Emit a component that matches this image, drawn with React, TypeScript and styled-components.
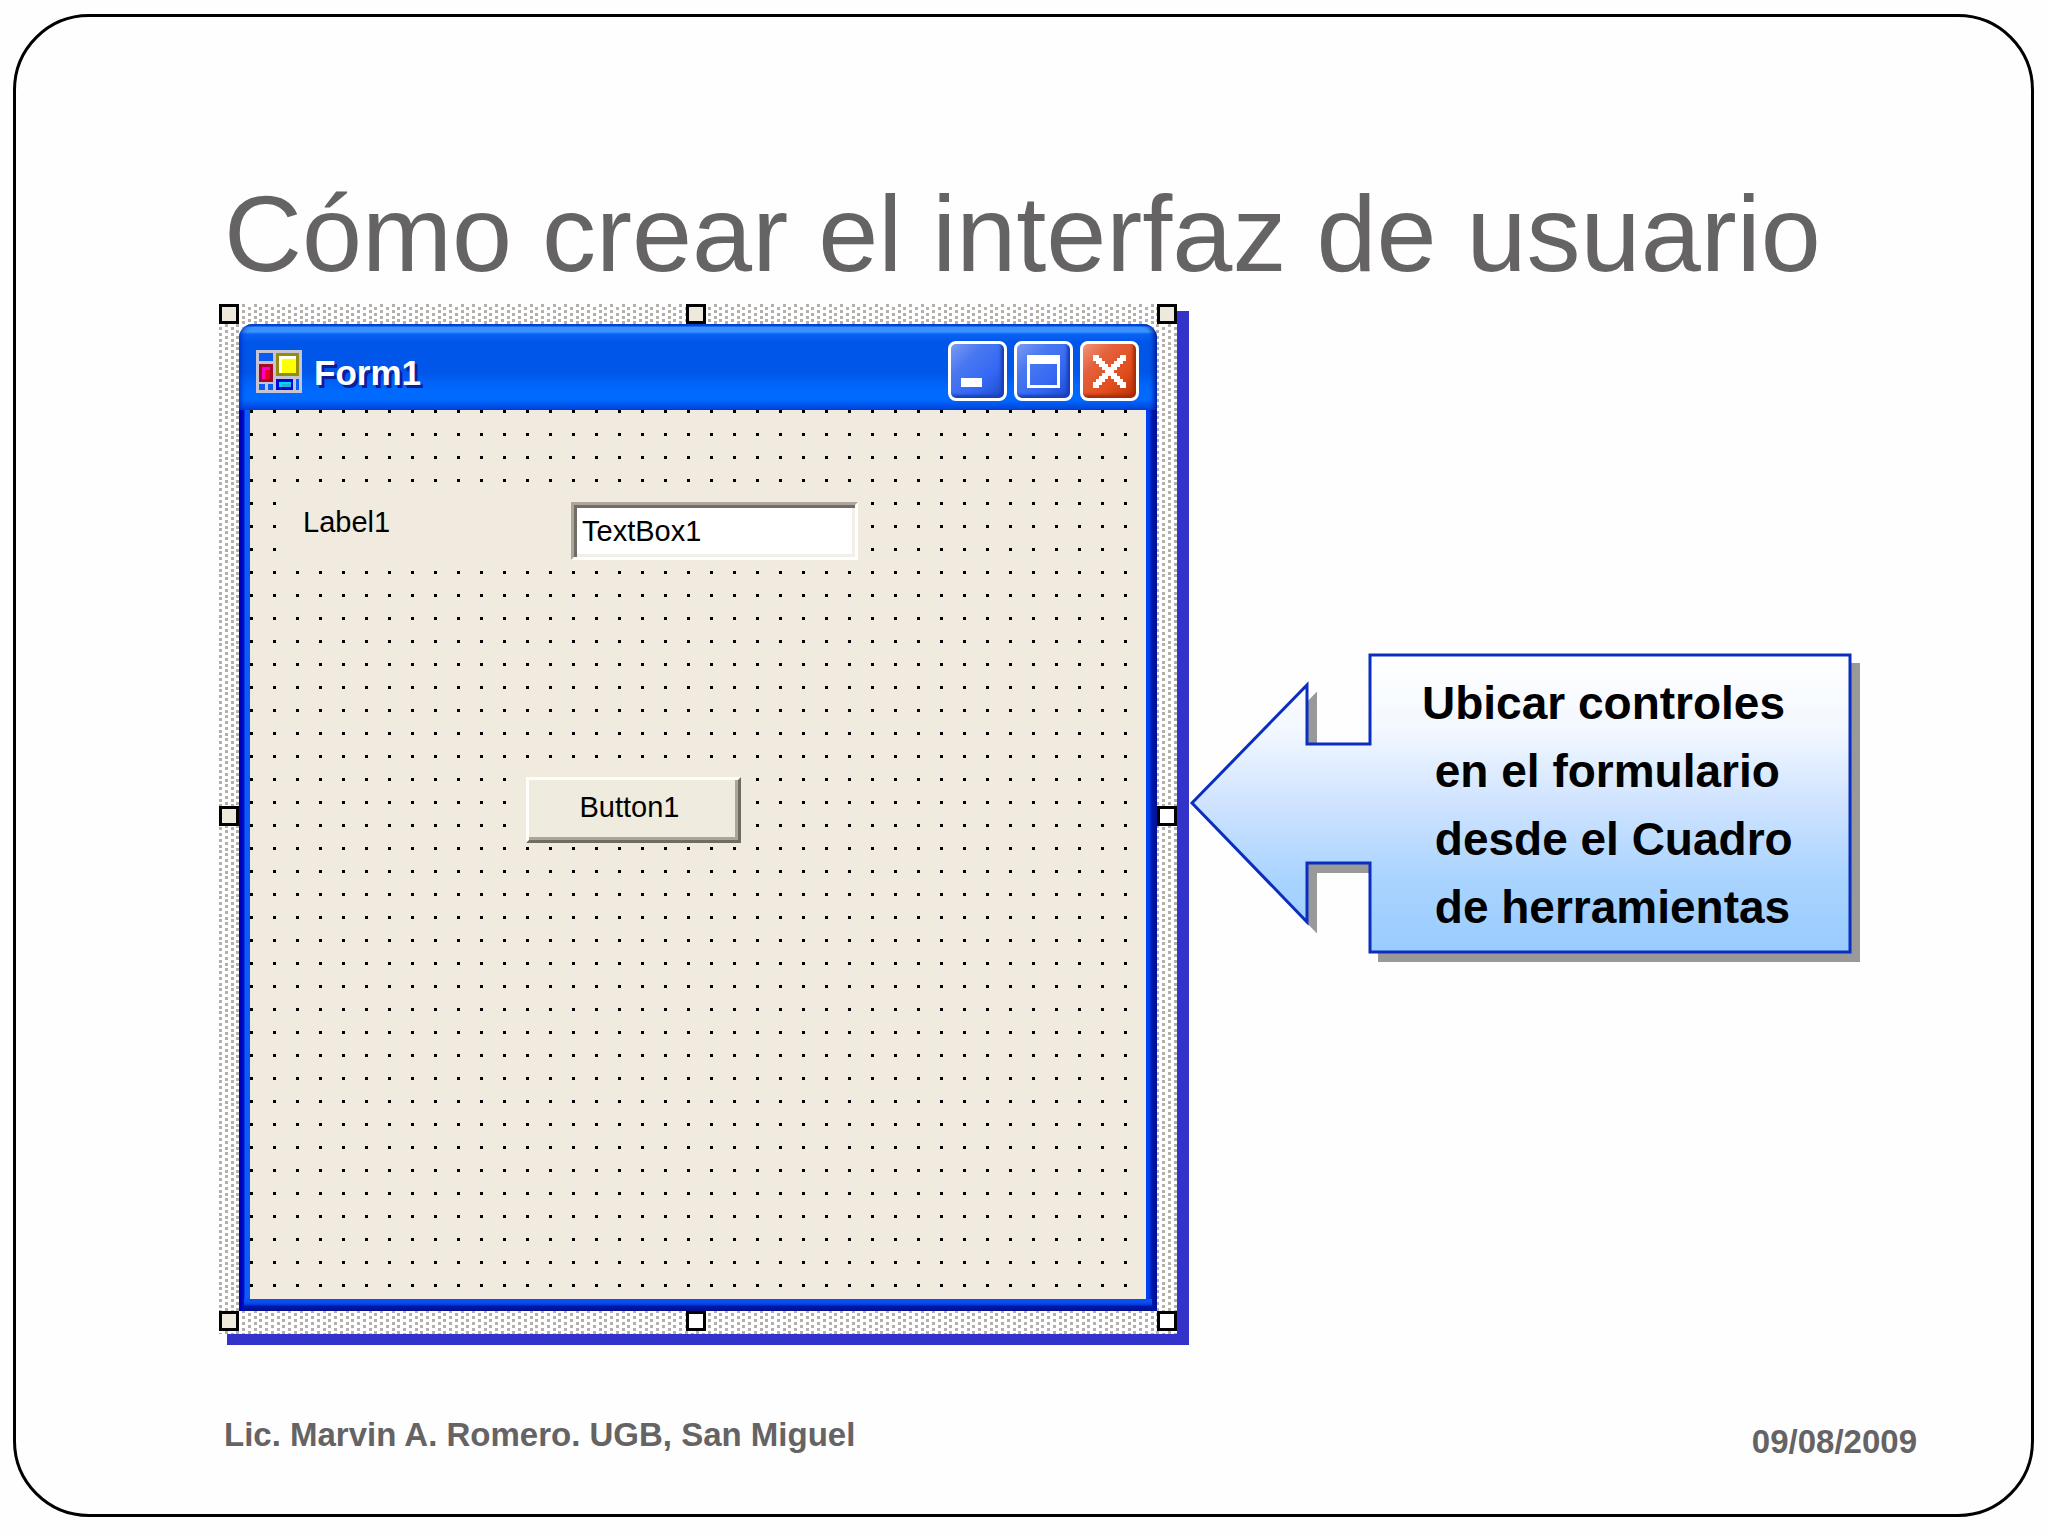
import React from "react";
import styled, { createGlobalStyle } from "styled-components";

const sans = `"Liberation Sans", Arial, sans-serif`;
const ink = "#656364";
const face = "#f1eadf";

/* One square dot at the top left of a tile, as a background layer. */
const dot = (size: number, color: string, x: number, y: number, tile: number) =>
  `conic-gradient(at ${size}px ${size}px, transparent 75%, ${color} 0) ${x}px ${y}px / ${tile}px ${tile}px`;

/* The staggered dither of a selected form: every second column is shifted down. */
const hatch = [0, 6, 12, 17]
  .flatMap((x, column) =>
    (column % 2 ? [3, 9, 15, 20] : [0, 6, 12, 17]).map((y) => dot(3, "#b3afab", x, y, 23))
  )
  .join(", ");

const GlobalStyle = createGlobalStyle`
  *, *::before, *::after { box-sizing: border-box; }
  body { margin: 0; background: #fefefe; }
`;

const Slide = styled.main`
  display: flex;
  flex-direction: column;
  min-height: calc(100vh - 34px);
  margin: 14px 14px 20px 13px;
  padding: 157px 114px 48px 203px;
  border: 3px solid #000;
  border-radius: 76px;
  color: ${ink};
  font-family: ${sans};
`;

const Title = styled.h1`
  margin: 0 0 10px;
  padding-left: 5px;
  font-size: 108px;
  font-weight: 400;
  line-height: 120px;
  white-space: nowrap;
`;

const Content = styled.div`
  display: grid;
  grid-template-columns: minmax(0, 958fr) minmax(0, 660fr);
  gap: 14px;
  align-items: center;
  padding-right: 66px;
`;

const Designer = styled.section`
  position: relative;
  padding: 20px 20px 23px;
  background: ${hatch}, #fff;
  box-shadow: 10px 9px 0 2px #3333cc;
`;

const Handle = styled.span<{ $x: string; $y: string; $locked?: boolean }>`
  position: absolute;
  left: ${(p) => ({ start: "0", middle: "calc(50% - 12px)", end: "calc(100% - 20px)" })[p.$x]};
  top: ${(p) => ({ start: "0", middle: "calc(50% - 13px)", end: "calc(100% - 23px)" })[p.$y]};
  width: 20px;
  height: 20px;
  border: 3px solid #000;
  background: ${(p) => (p.$locked ? "#edeadd" : "#fff")};
`;

const Window = styled.div`
  border-radius: 16px 16px 0 0;
  background: linear-gradient(90deg, #0000b4 0 2px, #0010d0 5px, #0a5cf5 6px 11px, #0050f0 11px, #0040f0 calc(100% - 8px), #0018a8 calc(100% - 5px), #00109c);
`;

const TitleBar = styled.header`
  display: flex;
  align-items: center;
  height: 86px;
  padding: 8px 18px 0 17px;
  border-radius: 14px 14px 0 0;
  background: linear-gradient(
    #0048dc 0 2px,
    #3a92ff 3px 8px,
    #0a62f6 10px,
    #0056e8 18px 48px,
    #0064fa 60px,
    #006aff 68px 76px,
    #0058f0 80px,
    #0044d4
  );
  box-shadow: inset -6px 0 5px -3px #001c9c, inset 5px 0 5px -3px #0030c8;
`;

const Caption = styled.h2`
  flex: 1;
  margin: 0;
  padding: 4px 0 0 12px;
  color: #fff;
  font-size: 35px;
  font-weight: 700;
  line-height: 48px;
  text-shadow: 3px 3px 0 #0a1f9c;
`;

const Controls = styled.div`
  display: flex;
  gap: 7px;
`;

const CaptionButton = styled.button<{ $danger?: boolean }>`
  display: grid;
  place-items: center;
  width: 59px;
  height: 60px;
  padding: 0;
  border: 3px solid #fff;
  border-radius: 8px;
  background: ${(p) =>
    p.$danger
      ? "linear-gradient(135deg, #f0957a 0, #e4603c 30%, #e04e1c 65%, #b83208 100%)"
      : "linear-gradient(135deg, #7c9cf4 0, #4a78f0 30%, #3468f4 65%, #1c48c8 100%)"};
  box-shadow: ${(p) => (p.$danger ? "inset -3px -3px 3px #a82c08" : "inset -3px -3px 3px #1840b8")};
`;

const Client = styled.div`
  min-height: 889px;
  margin: 0 11px;
  padding: 92px 46px 0;
  background: ${dot(3, "#000", 0, 0, 23)}, ${face};
`;

const BottomEdge = styled.div`
  height: 12px;
  margin: 0 5px;
  background: linear-gradient(#0a50f0 0 3px, #0038e0 6px, #0018a8 7px, #00108c);
`;

const Field = styled.div`
  display: flex;
  font-size: 29px;
  color: #000;
`;

const FieldLabel = styled.label`
  width: 275px;
  padding-left: 7px;
  background: ${face};
  line-height: 40px;
`;

const TextBox = styled.input`
  width: 287px;
  height: 58px;
  padding: 0 8px;
  border: 3px solid;
  border-color: #aca59a #fffefb #fffefb #aca59a;
  border-radius: 0;
  background: #fff;
  box-shadow: inset 3px 3px 0 #716c66, inset -3px -3px 0 #f1efe9;
  color: #000;
  font: inherit;
  outline: 0;
`;

const PushButton = styled.button`
  display: block;
  width: 215px;
  height: 66px;
  margin: 217px 0 0 230px;
  padding: 0 8px 6px 0;
  border: 3px solid;
  border-color: #fffefa #716c62 #716c62 #fffefa;
  background: #efebdf;
  box-shadow: inset -3px -3px 0 #aca699;
  color: #000;
  font-family: ${sans};
  font-size: 29px;
  line-height: 40px;
`;

const Callout = styled.aside`
  position: relative;
  margin-bottom: 32px;
  padding: 15px 0 12px 35%;
  color: #000;
  font-size: 46px;
  font-weight: 700;
  line-height: 68px;
  white-space: pre;
`;

const CalloutShape = styled.svg`
  position: absolute;
  inset: 0;
  width: 100%;
  height: 100%;
  overflow: visible;
`;

const CalloutText = styled.p`
  position: relative;
  margin: 0;
`;

const Footer = styled.footer`
  display: flex;
  justify-content: space-between;
  min-height: 55px;
  margin-top: 77px;
  padding-left: 5px;
  font-size: 33px;
  font-weight: 700;
  line-height: 48px;
`;

const SlideDate = styled.time`
  align-self: flex-end;
`;

const FormIcon = () => (
  <svg width="46" height="43" viewBox="0 0 16 15" preserveAspectRatio="none" shapeRendering="crispEdges" aria-hidden="true">
    <path fill="#c4c4d4" d="M0 0h16v15H0z" />
    <path fill="#0a5cf0" d="M1 1h5v3H1zM1 12h2v2H1zM4 12h2v2H4zM14 10h1v4h-1z" />
    <path fill="#968a10" d="M7 1h8v8H7z" />
    <path fill="#fffff0" d="M8 2h6v6H8z" />
    <path fill="#ffff00" d="M9 3h5v5H9z" />
    <path fill="#a80828" d="M1 5h5v6H1z" />
    <path fill="#ff00c8" d="M2 6h3v4H2z" />
    <path fill="#f00018" d="M3 7h2v3H3z" />
    <path fill="#0008d8" d="M7 10h6v4H7z" />
    <path fill="#00d8ff" d="M8 11h4v2H8z" />
    <path fill="#20b0d8" d="M9 12h3v1H9z" />
  </svg>
);

const MinimizeGlyph = () => (
  <svg width="33" height="33" viewBox="0 0 33 33" aria-hidden="true">
    <path fill="#fff" d="M0 23h21v9H0z" />
  </svg>
);

const MaximizeGlyph = () => (
  <svg width="33" height="33" viewBox="0 0 33 33" aria-hidden="true">
    <path fill="#fff" fillRule="evenodd" d="M0 0h33v33H0zM3 9v21h27V9z" />
  </svg>
);

/* Two stepped diagonals: three cells wide, with the far corners cut. */
const CloseGlyph = () => (
  <svg width="33" height="33" viewBox="0 0 11 11" shapeRendering="crispEdges" fill="#fff" aria-hidden="true">
    {Array.from({ length: 9 }, (_, i) => (
      <React.Fragment key={i}>
        <path d={`M${i} ${i + 1}h1v-1h1v1h1v1h-1v1h-1v-1h-1z`} />
        <path d={`M${8 - i} ${i + 1}h1v-1h1v1h1v1h-1v1h-1v-1h-1z`} />
      </React.Fragment>
    ))}
    <path d="M0 0h2v2H0zM9 0h2v2H9zM0 9h2v2H0zM9 9h2v2H9z" />
  </svg>
);

const arrow = "M179 1H659V298H179V209H116V268L1 149L116 31V90H179Z";

const handles: [string, string, boolean][] = [
  ["start", "start", true],
  ["middle", "start", true],
  ["end", "start", true],
  ["start", "middle", true],
  ["end", "middle", false],
  ["start", "end", true],
  ["middle", "end", false],
  ["end", "end", false],
];

export default function App() {
  return (
    <>
      <GlobalStyle />
      <Slide>
        <Title>Cómo crear el interfaz de usuario</Title>
        <Content>
          <Designer>
            <Window>
              <TitleBar>
                <FormIcon />
                <Caption>Form1</Caption>
                <Controls>
                  <CaptionButton type="button" aria-label="Minimizar">
                    <MinimizeGlyph />
                  </CaptionButton>
                  <CaptionButton type="button" aria-label="Maximizar">
                    <MaximizeGlyph />
                  </CaptionButton>
                  <CaptionButton type="button" aria-label="Cerrar" $danger>
                    <CloseGlyph />
                  </CaptionButton>
                </Controls>
              </TitleBar>
              <Client>
                <Field>
                  <FieldLabel htmlFor="textbox1">Label1</FieldLabel>
                  <TextBox id="textbox1" type="text" defaultValue="TextBox1" />
                </Field>
                <PushButton type="button">Button1</PushButton>
              </Client>
              <BottomEdge />
            </Window>
            {handles.map(([x, y, locked]) => (
              <Handle key={x + y} $x={x} $y={y} $locked={locked} />
            ))}
          </Designer>
          <Callout>
            <CalloutShape viewBox="0 0 660 299" preserveAspectRatio="none" aria-hidden="true">
              <defs>
                <linearGradient id="sky" x1="0" y1="0" x2="0" y2="1">
                  <stop offset="0" stopColor="#ffffff" />
                  <stop offset="0.25" stopColor="#f3f8ff" />
                  <stop offset="0.5" stopColor="#cfe3ff" />
                  <stop offset="0.75" stopColor="#aad4ff" />
                  <stop offset="1" stopColor="#99ccff" />
                </linearGradient>
              </defs>
              <path d={arrow} fill="#999999" stroke="#999999" strokeWidth="2" transform="translate(9 9)" />
              <path d={arrow} fill="url(#sky)" stroke="#0a2fbe" strokeWidth="3" vectorEffect="non-scaling-stroke" />
            </CalloutShape>
            <CalloutText>{"Ubicar controles\n en el formulario\n desde el Cuadro\n de herramientas"}</CalloutText>
          </Callout>
        </Content>
        <Footer>
          <span>Lic. Marvin A. Romero. UGB, San Miguel</span>
          <SlideDate dateTime="2009-08-09">09/08/2009</SlideDate>
        </Footer>
      </Slide>
    </>
  );
}
